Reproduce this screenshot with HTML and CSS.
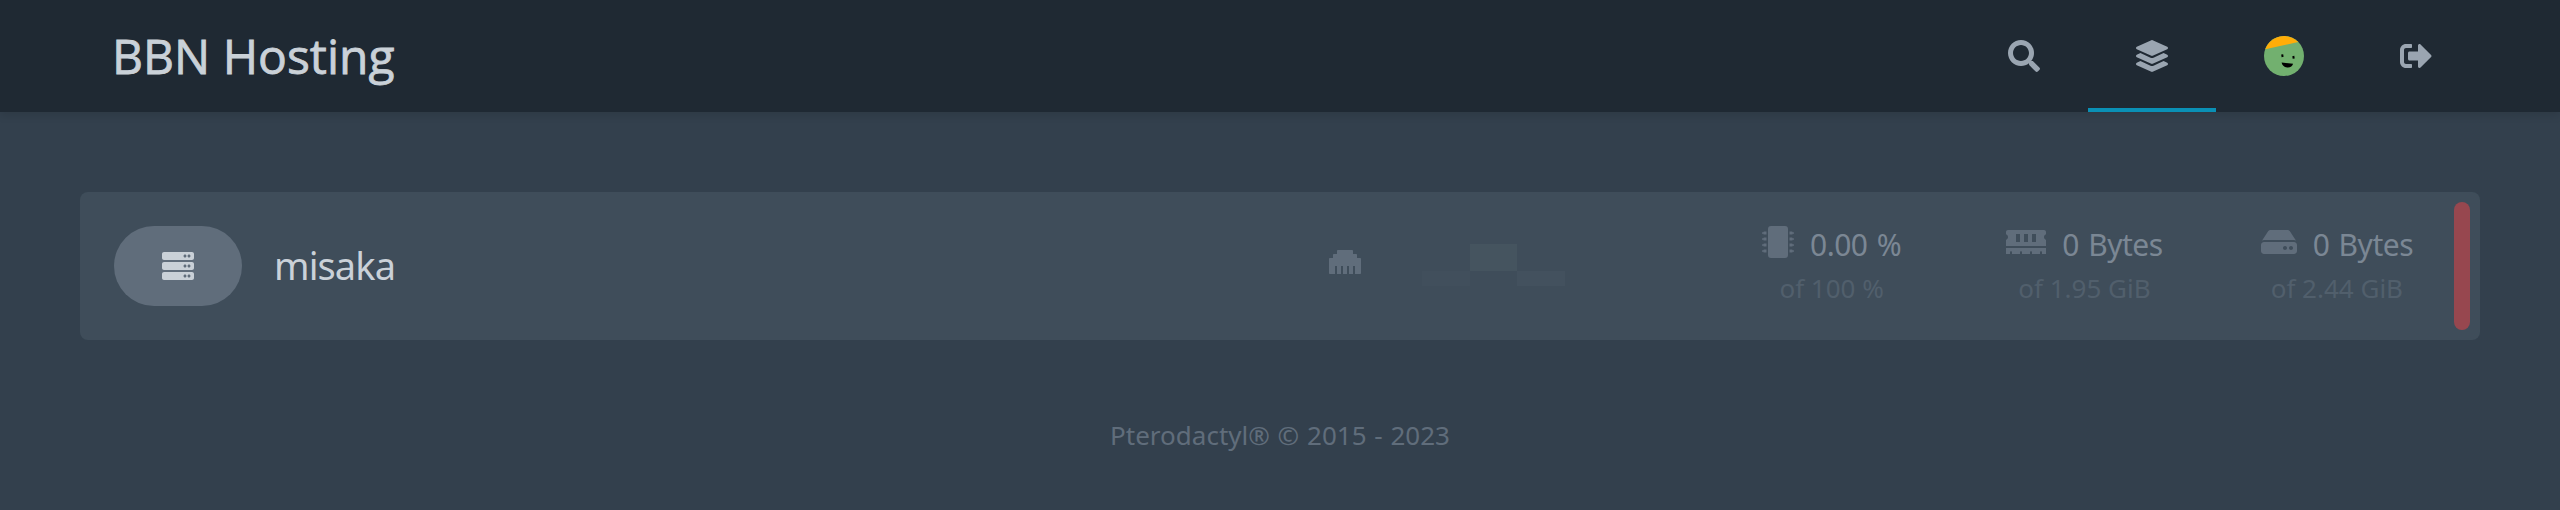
FILE: index.html
```html
<!DOCTYPE html>
<html lang="en">
<head>
<meta charset="utf-8">
<title>BBN Hosting</title>
<link rel="stylesheet" href="styles.css">
</head>
<body>
<header class="navbar">
  <a class="brand">BBN Hosting</a>
  <nav class="nav-links">
    <a class="nav-link"><svg class="icon" viewBox="0 0 512 512"><path d="M505 442.7L405.3 343c-4.5-4.5-10.6-7-17-7H372c27.6-35.3 44-79.7 44-128C416 93.1 322.9 0 208 0S0 93.1 0 208s93.1 208 208 208c48.3 0 92.7-16.4 128-44v16.3c0 6.4 2.5 12.5 7 17l99.7 99.7c9.4 9.4 24.6 9.4 33.9 0l28.3-28.3c9.4-9.4 9.4-24.6.1-34zM208 336c-70.7 0-128-57.2-128-128 0-70.7 57.2-128 128-128 70.7 0 128 57.2 128 128 0 70.7-57.2 128-128 128z"/></svg></a>
    <a class="nav-link active"><svg class="icon" viewBox="0 0 512 512"><path d="M12.41 148.02l232.94 105.67c6.8 3.09 14.49 3.09 21.29 0l232.94-105.67c16.55-7.51 16.55-32.52 0-40.03L266.65 2.31a25.607 25.607 0 0 0-21.29 0L12.41 107.98c-16.55 7.51-16.55 32.53 0 40.04zm487.18 88.28l-58.09-26.33-161.64 73.27c-7.56 3.43-15.59 5.17-23.86 5.17s-16.29-1.74-23.86-5.17L70.51 209.97l-58.1 26.33c-16.55 7.5-16.55 32.5 0 40l232.94 105.59c6.8 3.08 14.49 3.08 21.29 0L499.59 276.3c16.55-7.5 16.55-32.5 0-40zm0 127.8l-57.87-26.23-161.86 73.37c-7.56 3.43-15.59 5.17-23.86 5.17s-16.29-1.74-23.86-5.17L70.29 337.87 12.41 364.1c-16.55 7.5-16.55 32.5 0 40l232.94 105.59c6.8 3.08 14.49 3.08 21.29 0L499.59 404.1c16.55-7.5 16.55-32.5 0-40z"/></svg></a>
    <a class="nav-link nav-avatar"><svg class="avatar" viewBox="0 0 40 40"><circle cx="20" cy="20" r="20" fill="#72b06f"/><path d="M1.3 13.2L34.3 6A20 20 0 0 0 1.3 13.2z" fill="#ffad08"/><path d="M17.2 18.6l2-.4.4 2.6-2 .4zM28.3 20.2l2-.4.4 2.6-2 .4zM17.6 26.6l11.5 1.2c-.6 2.6-3 4-6 3.700-3-.3-5.300-2.200-5.500-4.900z" fill="#000"/></svg></a>
    <a class="nav-link"><svg class="icon" viewBox="0 0 512 512"><path d="M497 273L329 441c-15 15-41 4.500-41-17v-96H152c-13.300 0-24-10.700-24-24v-96c0-13.300 10.700-24 24-24h136V88c0-21.400 25.900-32 41-17l168 168c9.300 9.400 9.300 24.600 0 34zM192 436v-40c0-6.600-5.400-12-12-12H96c-17.700 0-32-14.300-32-32V160c0-17.700 14.300-32 32-32h84c6.600 0 12-5.400 12-12V76c0-6.600-5.400-12-12-12H96c-53 0-96 43-96 96v192c0 53 43 96 96 96h84c6.600 0 12-5.400 12-12z"/></svg></a>
  </nav>
</header>
<main class="content">
  <section class="server-row">
    <div class="server-icon"><svg class="icon" viewBox="0 0 512 512"><path id="unit" fill-rule="evenodd" d="M480 160H32c-17.673 0-32-14.327-32-32V64c0-17.673 14.327-32 32-32h448c17.673 0 32 14.327 32 32v64c0 17.673-14.327 32-32 32zm-48-88c-13.255 0-24 10.745-24 24s10.745 24 24 24 24-10.745 24-24-10.745-24-24-24zm-64 0c-13.255 0-24 10.745-24 24s10.745 24 24 24 24-10.745 24-24-10.745-24-24-24z"/><use href="#unit" y="160"/><use href="#unit" y="320"/></svg></div>
    <p class="server-name">misaka</p>
    <div class="allocation">
      <svg class="icon" viewBox="0 0 512 512"><path d="M496 192h-48v-48c0-8.800-7.200-16-16-16h-48V80c0-8.800-7.200-16-16-16H144c-8.800 0-16 7.200-16 16v48H80c-8.800 0-16 7.200-16 16v48H16c-8.800 0-16 7.200-16 16v224c0 8.800 7.200 16 16 16h80V320h32v128h64V320h32v128h64V320h32v128h64V320h32v128h80c8.800 0 16-7.200 16-16V208c0-8.800-7.200-16-16-16z"/></svg>
      <div class="mosaic"><i class="tile tile-left"></i><i class="tile tile-mid"></i><i class="tile tile-right"></i></div>
    </div>
    <div class="stat stat-cpu">
      <div class="stat-main"><svg class="icon" viewBox="0 0 512 512"><rect x="96" width="320" height="512" rx="48"/><path id="pin" d="M512 106v12a6 6 0 0 1-6 6h-18v6a6 6 0 0 1-6 6h-42V88h42a6 6 0 0 1 6 6v6h18a6 6 0 0 1 6 6zM0 106v12a6 6 0 0 0 6 6h18v6a6 6 0 0 0 6 6h42V88H30a6 6 0 0 0-6 6v6H6a6 6 0 0 0-6 6z"/><use href="#pin" y="96"/><use href="#pin" y="192"/><use href="#pin" y="288"/></svg><span class="value">0.00 %</span></div>
      <p class="limit">of 100 %</p>
    </div>
    <div class="stat stat-memory">
      <div class="stat-main"><svg class="icon" viewBox="0 0 640 512"><path d="M640 130.940V96c0-17.670-14.330-32-32-32H32c-17.670 0-32 14.330-32 32v34.940c18.600 6.610 32 24.190 32 45.060s-13.400 38.450-32 45.060V320h640v-98.940c-18.600-6.610-32-24.190-32-45.060s13.400-38.450 32-45.060zM224 256h-64V128h64v128zm128 0h-64V128h64v128zm128 0h-64V128h64v128zM0 448h64v-26.670c0-8.840 7.160-16 16-16s16 7.160 16 16V448h128v-26.670c0-8.840 7.160-16 16-16s16 7.160 16 16V448h128v-26.670c0-8.840 7.160-16 16-16s16 7.160 16 16V448h128v-26.670c0-8.840 7.160-16 16-16s16 7.160 16 16V448h64v-96H0v96z"/></svg><span class="value">0 Bytes</span></div>
      <p class="limit">of 1.95 GiB</p>
    </div>
    <div class="stat stat-disk">
      <div class="stat-main"><svg class="icon disk-icon" viewBox="0 0 576 512"><path d="M576 304v96c0 26.510-21.490 48-48 48H48c-26.510 0-48-21.490-48-48v-96c0-26.510 21.490-48 48-48h480c26.510 0 48 21.490 48 48zm-48-80a79.557 79.557 0 0 1 30.777 6.165L462.250 85.374A48.003 48.003 0 0 0 422.311 64H153.689a48 48 0 0 0-39.938 21.374L17.223 230.165A79.557 79.557 0 0 1 48 224h480zm-48 96c-17.673 0-32 14.327-32 32s14.327 32 32 32 32-14.327 32-32-14.327-32-32-32zm-96 0c-17.673 0-32 14.327-32 32s14.327 32 32 32 32-14.327 32-32-14.327-32-32-32z"/></svg><span class="value">0 Bytes</span></div>
      <p class="limit">of 2.44 GiB</p>
    </div>
    <div class="status-bar"></div>
  </section>
  <footer class="footer">Pterodactyl® © 2015 - 2023</footer>
</main>
</body>
</html>
```
FILE: styles.css
```css
* { box-sizing: border-box; margin: 0; padding: 0; }
body {
  height: 510px;
  background: #33404d;
  font-family: "Noto Sans", "Open Sans", sans-serif;
  color: #cad1d8;
  overflow: hidden;
}
.icon { height: 32px; fill: currentColor; display: block; flex: none; }
.navbar {
  height: 112px;
  background: #1f2933;
  box-shadow: 0 4px 8px rgba(0, 0, 0, .1);
  display: flex;
  justify-content: space-between;
  padding: 0 80px;
}
.brand {
  padding-left: 32px;
  font: 400 48px/112px "Open Sans", sans-serif;
  -webkit-text-stroke: .8px currentColor;
}
.nav-links { display: flex; color: #9aa5b1; }
.nav-link { display: flex; align-items: center; padding: 0 48px; }
.active { box-shadow: inset 0 -4px #0a90b5; }
.avatar { width: 40px; height: 40px; display: block; }
.content { padding: 80px 80px 0; }
.server-row {
  height: 148px;
  border-radius: 8px;
  background: #3f4d5a;
  display: flex;
  align-items: center;
  padding: 0 10px 0 34px;
}
.server-icon {
  width: 128px; height: 80px;
  flex: none;
  border-radius: 40px;
  background: #606d7b;
  display: flex; align-items: center; justify-content: center;
}
.server-name { flex: none; margin-left: 32px; padding-bottom: 2px; width: 1055px; font-size: 38px; letter-spacing: -.9px; line-height: 56px; white-space: nowrap; }
.allocation { flex: none; display: flex; align-items: center; width: 433px; color: #606d7b; }
.allocation .icon { margin-top: -8px; }
.mosaic { display: grid; grid-template-columns: 48px 47px 48px; grid-template-rows: 27px 15px; margin: -3px 0 0 61px; }
.tile-left { grid-area: 2 / 1; background: #414f5c; }
.tile-mid { grid-area: 1 / 2; background: #45545f; }
.tile-right { grid-area: 2 / 3; background: #43515e; }
.stat { flex: none; text-align: center; white-space: nowrap; }
.stat-main { display: flex; align-items: center; gap: 16px; height: 45px; color: #606d7b; }
.stat-main .icon { margin-top: -6px; }
.value { font-size: 30px; line-height: 40px; letter-spacing: -.5px; word-spacing: 2px; color: #7b8794; }
.limit { font-size: 26px; line-height: 40px; margin-bottom: 2px; color: #515f6c; }
.stat-memory { margin-left: 105px; }
.stat-disk { margin-left: 98px; }
.status-bar { margin-left: auto; width: 16px; height: 128px; border-radius: 8px; background: #97474f; }
.footer { margin-top: 75px; text-align: center; font-size: 26px; word-spacing: 1px; line-height: 40px; color: #606d7b; }
```
